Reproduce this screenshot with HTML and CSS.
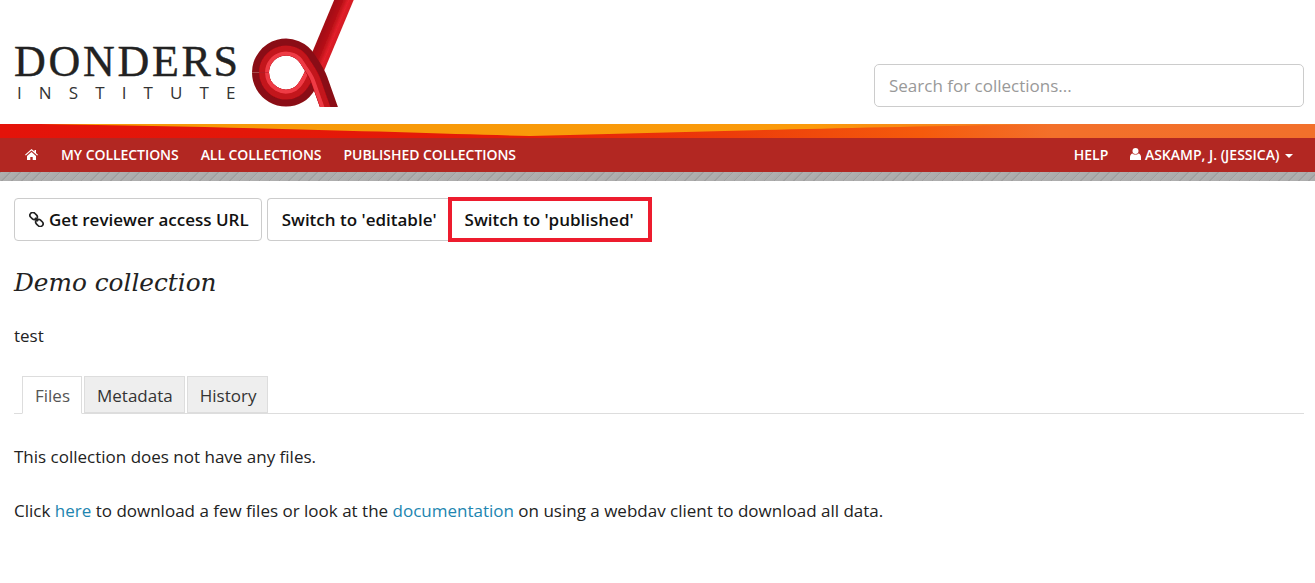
FILE: index.html
```html
<!DOCTYPE html>
<html>
<head>
    <meta charset="UTF-8">
    <title>Demo collection</title>
    <link rel="stylesheet" href="styles.css">
</head>
<body>
    <header class="site-header">
        <a class="logo" href="#">
            <div class="logo-text">
                <div class="logo-name">DONDERS</div>
                <div class="logo-sub">INSTITUTE</div>
            </div>
            <svg class="logo-mark" width="110" height="107" viewBox="250 0 110 107" fill="none">
                <defs>
                    <linearGradient id="stem" gradientUnits="userSpaceOnUse" x1="326" y1="26" x2="343" y2="33">
                        <stop offset="0" stop-color="#a50d13"/>
                        <stop offset="0.3" stop-color="#b50f16"/>
                        <stop offset="0.6" stop-color="#e2202a"/>
                        <stop offset="1" stop-color="#c9161e"/>
                    </linearGradient>
                    <filter id="soft"><feGaussianBlur stdDeviation="0.5"/></filter>
                </defs>
                <g filter="url(#soft)">
                    <!-- lower half of the ring, running into the stem -->
                    <path d="M260.5 72.5 A25.5 25.5 0 0 0 298.75 94.6 C307 90 311 79 315.5 68" stroke="#8a0c12" stroke-width="17"/>
                    <path d="M264 72.5 A22 22 0 0 0 297 91.55 C304 87 308 78 312 68" stroke="#c3121a" stroke-width="10"/>
                    <path d="M267 72.5 A19 19 0 0 0 295.5 88.95 C301.5 85 304.5 77 308.5 68" stroke="#ee3a44" stroke-width="4"/>
                    <path d="M315 69 L346 -5" stroke="url(#stem)" stroke-width="18"/>
                    <!-- upper half of the ring, running into the leg -->
                    <path d="M260.5 72.5 A25.5 25.5 0 0 1 308 59.75 C312 66.7 316 71 319.3 80 L330 110" stroke="#8a0c12" stroke-width="17"/>
                    <path d="M264 72.5 A22 22 0 0 1 305.05 61.5 C308 67 312.6 72 315.6 80 L326.2 110" stroke="#c3121a" stroke-width="10"/>
                    <path d="M267 72.5 A19 19 0 0 1 302.45 63 C305 67.8 309.7 72 312.8 80 L323.4 110" stroke="#ee3a44" stroke-width="4"/>
                </g>
            </svg>
        </a>
        <input class="search" type="text" placeholder="Search for collections...">
    </header>

    <svg class="banner" width="1315" height="14" viewBox="0 0 1315 14" preserveAspectRatio="none">
        <defs>
            <linearGradient id="bannerBase" x1="0" x2="1" y1="0" y2="0">
                <stop offset="0" stop-color="#e4130a"/>
                <stop offset="0.4" stop-color="#e41c08"/>
                <stop offset="0.7" stop-color="#f55a0c"/>
                <stop offset="0.8" stop-color="#f3702a"/>
                <stop offset="1" stop-color="#f2702b"/>
            </linearGradient>
            <linearGradient id="bannerWave" x1="0" x2="1" y1="0" y2="0">
                <stop offset="0" stop-color="#f59a08"/>
                <stop offset="0.75" stop-color="#fb9a0a"/>
                <stop offset="1" stop-color="#f3702a"/>
            </linearGradient>
        </defs>
        <rect width="1315" height="14" fill="url(#bannerBase)"/>
        <path d="M40 0 C250 3 420 9 530 12 C700 8 850 3 1070 0 Z" fill="url(#bannerWave)"/>
    </svg>
    <nav class="main-nav">
        <ul class="nav-left">
            <li class="nav-home"><a href="#">
                <svg class="nav-icon" width="13" height="11" viewBox="0 0 13 11"><path d="M6.5 0 L9.5 2.6 V1 H11 V3.9 L13 5.7 L12.2 6.5 L6.5 1.6 L.8 6.5 L0 5.7 Z M2 6.9 L6.5 3 L11 6.9 V11 H7.7 V8 H5.3 V11 H2 Z" fill="#fff"/></svg>
            </a></li>
            <li><a href="#">MY COLLECTIONS</a></li>
            <li><a href="#">ALL COLLECTIONS</a></li>
            <li><a href="#">PUBLISHED COLLECTIONS</a></li>
        </ul>
        <ul class="nav-right">
            <li><a href="#">HELP</a></li>
            <li><a href="#">
                <svg class="user-icon" width="11" height="12" viewBox="0 0 11 12"><circle cx="5.5" cy="3" r="3" fill="#fff"/><path d="M0 12 V9 C0 7 1.2 5.6 2.6 5.4 C3.4 6.2 4.4 6.6 5.5 6.6 C6.6 6.6 7.6 6.2 8.4 5.4 C9.8 5.6 11 7 11 9 V12 Z" fill="#fff"/></svg>
                ASKAMP, J. (JESSICA) <span class="caret"></span></a></li>
        </ul>
    </nav>
    <div class="texture"></div>

    <main class="content">
        <div class="actions">
            <a class="btn" href="#">
                <svg class="link-icon" width="15" height="15" viewBox="0 0 15 15" fill="none" stroke="#222" stroke-width="1.7"><rect x="0.6" y="1.3" width="8" height="5.6" rx="2.8" transform="rotate(45 4.6 4.1)"/><rect x="6.4" y="8.1" width="8" height="5.6" rx="2.8" transform="rotate(45 10.4 10.9)"/><path d="M5.8 5.8 L9.2 9.2"/></svg>
                Get reviewer access URL</a>
            <div class="btn-group">
                <a class="btn btn-first" href="#">Switch to 'editable'</a>
                <a class="btn btn-marked" href="#">Switch to 'published'</a>
            </div>
        </div>
        <h2 class="title">Demo collection</h2>
        <p class="description">test</p>
        <ul class="tabs">
            <li class="tab active"><a href="#">Files</a></li>
            <li class="tab"><a href="#">Metadata</a></li>
            <li class="tab"><a href="#">History</a></li>
        </ul>
        <p class="no-files">This collection does not have any files.</p>
        <p>Click <a class="link" href="#">here</a> to download a few files or look at the <a class="link" href="#">documentation</a> on using a webdav client to download all data.</p>
    </main>
</body>
</html>
```
FILE: styles.css
```css
body {
    font-family: "Open Sans", sans-serif;
    font-size: 17px;
    color: #222;
    margin: 0;
    padding: 0;
    background-color: #fff;
}
a {
    text-decoration: none;
    color: inherit;
}
p {
    margin: 0;
}
ul {
    list-style-type: none;
    margin: 0;
    padding: 0;
}
.site-header {
    height: 124px;
    display: flex;
    justify-content: space-between;
    align-items: flex-start;
    padding: 0 11px 0 14px;
}
.logo {
    display: flex;
    align-items: flex-start;
    color: #222;
}
.logo-text {
    width: 224px;
    margin-top: 41px;
}
.logo-name {
    font-family: "Liberation Serif", serif;
    font-size: 44px;
    line-height: 42px;
    letter-spacing: 2.7px;
    -webkit-text-stroke: 0.4px #222;
}
.logo-sub {
    font-family: "Open Sans", sans-serif;
    font-size: 17px;
    line-height: 20px;
    letter-spacing: 17.1px;
    color: #333;
    margin-left: 3px;
    white-space: nowrap;
}
.logo-mark {
    margin-left: 12px;
    display: block;
}
.search {
    width: 430px;
    height: 43px;
    box-sizing: border-box;
    margin-top: 64px;
    padding: 0 14px;
    font-family: "Open Sans", sans-serif;
    font-size: 17px;
    border: 1px solid #ccc;
    border-radius: 5px;
    background-color: #fff;
}
.search::placeholder {
    color: #999;
    opacity: 1;
}
.banner {
    display: block;
    width: 100%;
    height: 14px;
}
.main-nav {
    height: 34px;
    box-sizing: border-box;
    padding: 0 22px 2px 25px;
    background-color: #b22722;
    display: flex;
    justify-content: space-between;
    align-items: center;
    color: #fff;
    font-size: 14px;
    font-weight: 600;
}
.nav-left, .nav-right {
    display: flex;
    align-items: center;
    gap: 22px;
}
.nav-left {
    letter-spacing: -0.06px;
}
.nav-home {
    margin-right: 1px;
}
.nav-icon, .user-icon {
    display: inline-block;
}
.caret {
    display: inline-block;
    width: 0;
    height: 0;
    margin-left: 2px;
    vertical-align: middle;
    border-top: 4px solid #fff;
    border-left: 4px solid transparent;
    border-right: 4px solid transparent;
}
.texture {
    height: 9px;
    background-color: #a8a8a8;
    background-image: repeating-linear-gradient(135deg, #a0a0a0 0, #a0a0a0 1px, #b0b0b0 1px, #ababab 7px);
}
.content {
    padding: 16px 11px 0 14px;
}
.actions {
    display: flex;
    align-items: center;
    gap: 5px;
    height: 45px;
}
.btn {
    display: flex;
    align-items: center;
    gap: 5px;
    box-sizing: border-box;
    height: 43px;
    padding: 0 12px 0 14px;
    font-size: 17px;
    font-weight: 600;
    color: #111;
    background-color: #fff;
    border: 1px solid #ccc;
    border-radius: 4px;
}
.btn-group {
    display: flex;
    align-items: center;
}
.btn-first {
    border-radius: 4px 0 0 4px;
    border-right: 0;
    padding-right: 11px;
}
.btn-marked {
    height: 45px;
    padding: 0 14px 0 13px;
    border: 4px solid #ed1c2e;
    border-radius: 0;
}
.title {
    font-family: "DejaVu Serif", serif;
    font-style: italic;
    font-weight: 400;
    font-size: 24.75px;
    line-height: 32px;
    margin: 25px 0 0;
    color: #222;
}
.description {
    margin-top: 25px;
    line-height: 24px;
}
.tabs {
    display: flex;
    align-items: flex-end;
    gap: 2px;
    height: 37px;
    margin-top: 28px;
    padding-left: 8px;
    border-bottom: 1px solid #ddd;
}
.tab a {
    display: block;
    box-sizing: border-box;
    height: 37px;
    line-height: 37px;
    padding: 0 11px 0 12px;
    color: #333;
    background-color: #eee;
    border: 1px solid #ddd;
}
.tab.active a {
    height: 38px;
    color: #555;
    background-color: #fff;
    border-bottom-color: #fff;
    position: relative;
    top: 1px;
}
.no-files {
    margin-top: 31px;
    line-height: 24px;
}
.no-files + p {
    margin-top: 30px;
    line-height: 24px;
}
.link {
    color: #2185b0;
}
```
